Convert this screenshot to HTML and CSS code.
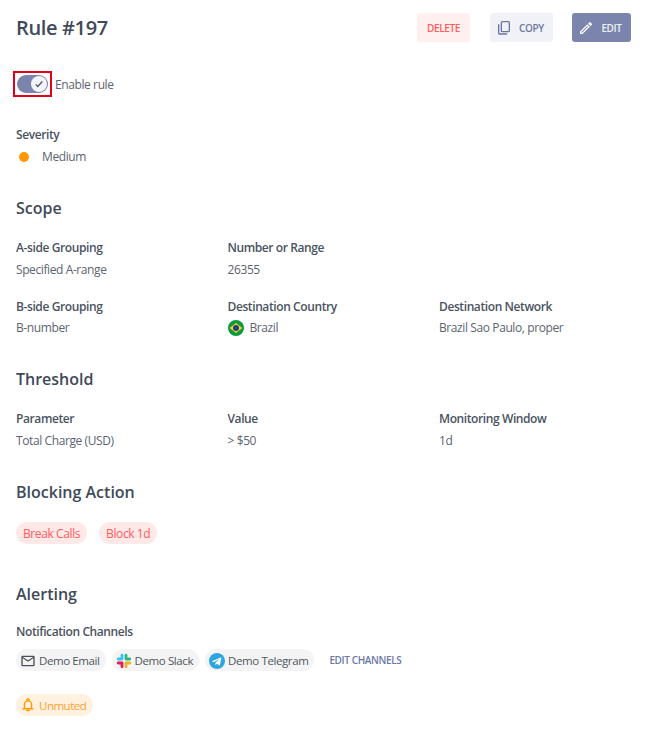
FILE: index.html
```html
<!DOCTYPE html>
<html lang="en">
	<head>
		<meta charset="UTF-8">
		<title>Rule #197</title>
		<link rel="stylesheet" href="styles.css">
	</head>
	<body>
		<div class="page">
			<div class="header">
				<h1>Rule #197</h1>
				<div class="actions">
					<button class="btn btn-delete">DELETE</button>
					<button class="btn btn-copy">
						<svg width="16" height="16" viewBox="0 0 24 24" fill="none" stroke="#6b77a3" stroke-width="2"><path d="M4 7v13a1 1 0 0 0 1 1h11" stroke-linecap="round"/><rect x="8" y="2.500" width="12" height="15" rx="1.500"/></svg>
						COPY
					</button>
					<button class="btn btn-edit">
						<svg width="16" height="16" viewBox="0 0 24 24" fill="#fff"><path d="M3 17.250V21h3.750L17.810 9.940l-3.750-3.750L3 17.250zM5.900 19H5v-.9l9.060-9.060.9.9L5.900 19zM20.710 7.040a1 1 0 0 0 0-1.410l-2.340-2.340a1 1 0 0 0-1.410 0l-1.830 1.830 3.750 3.750 1.830-1.830z"/></svg>
						EDIT
					</button>
				</div>
			</div>

			<div class="toggle-row">
				<div class="toggle-outline">
					<div class="toggle">
						<div class="knob">
							<svg width="10" height="10" viewBox="0 0 24 24" fill="none" stroke="#4a5568" stroke-width="3"><path d="M4 13l5 5L20 6"/></svg>
						</div>
					</div>
				</div>
				<span>Enable rule</span>
			</div>

			<div class="severity">
				<div class="label">Severity</div>
				<div class="severity-value"><i class="dot"></i>Medium</div>
			</div>

			<h2 class="scope-title">Scope</h2>
			<div class="grid">
				<div><div class="label">A-side Grouping</div><div class="value">Specified A-range</div></div>
				<div><div class="label">Number or Range</div><div class="value">26355</div></div>
				<div></div>
				<div><div class="label">B-side Grouping</div><div class="value value-tight">B-number</div></div>
				<div>
					<div class="label">Destination Country</div>
					<div class="value value-tight country">
						<svg width="16" height="16" viewBox="0 0 16 16"><circle cx="8" cy="8" r="8" fill="#0c9a3e"/><path d="M8 3L14.300 8 8 13 1.700 8z" fill="#ffd21f"/><circle cx="8" cy="8" r="3" fill="#1e3f8f"/></svg>
						Brazil
					</div>
				</div>
				<div><div class="label">Destination Network</div><div class="value value-tight">Brazil Sao Paulo, proper</div></div>
			</div>

			<h2 class="threshold-title">Threshold</h2>
			<div class="grid">
				<div><div class="label">Parameter</div><div class="value">Total Charge (USD)</div></div>
				<div><div class="label">Value</div><div class="value">&gt; $50</div></div>
				<div><div class="label">Monitoring Window</div><div class="value">1d</div></div>
			</div>

			<h2 class="blocking-title">Blocking Action</h2>
			<div class="chips chips-red">
				<span class="chip chip-red">Break Calls</span>
				<span class="chip chip-red">Block 1d</span>
			</div>

			<h2 class="alerting-title">Alerting</h2>
			<div class="label">Notification Channels</div>
			<div class="chips chips-channels">
				<span class="chip chip-grey">
					<svg width="16" height="16" viewBox="0 0 24 24" fill="#4a4f57"><path d="M22 6a2 2 0 0 0-2-2H4a2 2 0 0 0-2 2v12a2 2 0 0 0 2 2h16a2 2 0 0 0 2-2V6zm-2 0l-8 5-8-5h16zm0 12H4V8l8 5 8-5v10z"/></svg>
					Demo Email
				</span>
				<span class="chip chip-grey">
					<svg width="16" height="16" viewBox="0 0 16 16" fill="none" stroke-width="2.800" stroke-linecap="round"><path d="M6 2.200v3.600" stroke="#36c5f0"/><path d="M2.200 6h3.600" stroke="#36c5f0"/><path d="M13.800 6h-3.600" stroke="#2eb67d"/><path d="M10 2.200v3.600" stroke="#2eb67d"/><path d="M10 13.800v-3.600" stroke="#ecb22e"/><path d="M13.800 10h-3.600" stroke="#ecb22e"/><path d="M2.200 10h3.600" stroke="#e01e5a"/><path d="M6 13.800v-3.600" stroke="#e01e5a"/></svg>
					Demo Slack
				</span>
				<span class="chip chip-grey">
					<svg width="16" height="16" viewBox="0 0 16 16"><circle cx="8" cy="8" r="8" fill="#2ca5e0"/><path d="M3.200 7.900l8.600-3.400c.4-.1.700.1.600.6l-1.500 6.800c-.1.500-.4.600-.8.400L7.900 10.700l-1.100 1.100c-.2.200-.3.300-.5.300l.2-2.300 4-3.700c.2-.2 0-.3-.2-.1L5.300 9.100 3.200 8.500c-.5-.1-.5-.4 0-.6z" fill="#fff"/></svg>
					Demo Telegram
				</span>
				<span class="edit-channels">EDIT CHANNELS</span>
			</div>

			<div class="chips chips-mute">
				<span class="chip chip-orange">
					<svg width="14" height="14" viewBox="0 0 24 24" fill="none" stroke="#ff9800" stroke-width="2.400"><path d="M6 18V11a6 6 0 0 1 12 0v7M3.500 18.500h17M10 3.500a2 2 0 0 1 4 0M10 21.500h4" stroke-linecap="round"/></svg>
					Unmuted
				</span>
			</div>
		</div>
	</body>
</html>
```

FILE: styles.css
```css
* {
    box-sizing: border-box;
}

body {
    margin: 0;
    background: #ffffff;
    font-family: "Open Sans", Arial, sans-serif;
    font-size: 12px;
    letter-spacing: -0.4px;
    color: #5c6470;
}

.page {
    padding: 13px 16px 0;
}

/* Topo */
.header {
    display: flex;
    align-items: center;
    justify-content: space-between;
    height: 29px;
    padding-right: 1px;
}

h1 {
    margin: 0;
    font-size: 20px;
    font-weight: 600;
    line-height: 30px;
    letter-spacing: -0.35px;
    color: #3f4a59;
}

h2 {
    margin: 0;
    font-size: 16px;
    font-weight: 600;
    line-height: 22px;
    letter-spacing: 0;
    color: #3f4a59;
}

.actions {
    display: flex;
    gap: 19px;
}

.btn {
    display: flex;
    align-items: center;
    justify-content: center;
    gap: 7px;
    height: 29px;
    padding: 0;
    border: none;
    border-radius: 3px;
    font-family: inherit;
    font-size: 10px;
    font-weight: 600;
    letter-spacing: -0.35px;
}

.btn-delete {
    width: 53px;
    margin-right: 1px;
    background: #fff0f0;
    color: #ff5c5c;
}

.btn-copy {
    width: 63px;
    padding-right: 3px;
    background: #f1f2f7;
    color: #6b77a3;
}

.btn-edit {
    width: 59px;
    padding-right: 3px;
    background: #7a84ac;
    color: #f0f1f6;
}

/* Toggle */
.toggle-row {
    display: flex;
    align-items: center;
    gap: 3px;
    margin-top: 29px;
    margin-left: -3px;
}

.toggle-outline {
    width: 39px;
    height: 26px;
    border: 2px solid #e5001a;
    display: flex;
    align-items: center;
    justify-content: center;
}

.toggle {
    width: 31px;
    height: 18px;
    border-radius: 9px;
    background: #7a84ac;
    display: flex;
    align-items: center;
    justify-content: flex-end;
    padding-right: 1px;
}

.knob {
    width: 16px;
    height: 16px;
    border-radius: 50%;
    background: #f4f5f8;
    display: flex;
    align-items: center;
    justify-content: center;
}

/* Campos */
.label {
    font-weight: 600;
    line-height: 18px;
    color: #4a5361;
}

.value {
    margin-top: 4px;
    line-height: 18px;
}

.value-tight {
    margin-top: 3px;
}

.severity {
    margin-top: 29px;
}

.severity-value {
    display: flex;
    align-items: center;
    margin-top: 4px;
    line-height: 18px;
}

.dot {
    width: 10px;
    height: 10px;
    margin: 0 13px 0 3px;
    border-radius: 50%;
    background: #ff9800;
}

.grid {
    display: grid;
    grid-template-columns: repeat(3, 211.500px);
    row-gap: 19px;
}

.country {
    display: flex;
    align-items: center;
    gap: 6px;
}

.scope-title {
    margin-top: 31px;
    margin-bottom: 20px;
}

.threshold-title {
    margin-top: 31px;
    margin-bottom: 20px;
}

.blocking-title {
    margin-top: 31px;
}

.alerting-title {
    margin-top: 39px;
    margin-bottom: 18px;
}

/* Chips */
.chips {
    display: flex;
    align-items: center;
    gap: 6px;
}

.chips-red {
    gap: 12px;
    margin-top: 19px;
}

.chips-channels {
    margin-top: 8px;
}

.chips-mute {
    margin-top: 23px;
}

.chip {
    display: inline-flex;
    align-items: center;
    height: 22px;
    padding: 1px 7px 0;
    border-radius: 11px;
    line-height: 21px;
}

.chip-red {
    background: #ffe8e8;
    color: #ff5c5c;
}

.chip-grey {
    gap: 3px;
    padding: 1px 6px 0 4px;
    background: #f4f4f4;
    font-size: 11.500px;
    color: #4f5660;
}

.chip-orange {
    gap: 4px;
    padding: 0 7px 0 5px;
    background: #fff1e0;
    font-size: 11.500px;
    letter-spacing: -0.5px;
    color: #ff9f2e;
}

.edit-channels {
    margin-left: 9px;
    font-size: 10px;
    font-weight: 600;
    letter-spacing: -0.38px;
    color: #6b77a3;
}
```
